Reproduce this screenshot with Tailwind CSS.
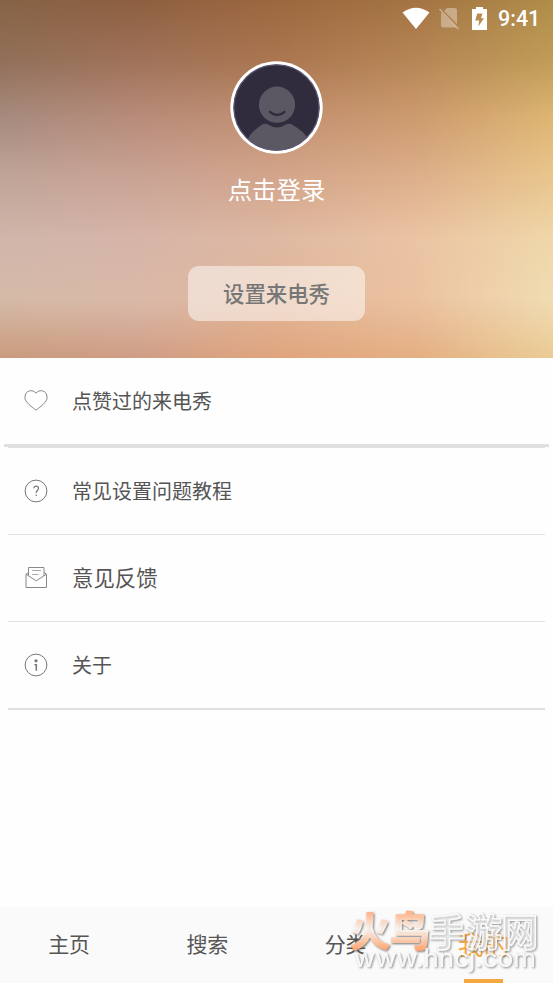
<!DOCTYPE html>
<html lang="zh-CN">
<head>
<meta charset="utf-8">
<title>我的</title>
<script src="https://cdn.jsdelivr.net/npm/@tailwindcss/browser@4"></script>
</head>
<body class="relative flex h-[983px] w-[553px] flex-col overflow-hidden bg-[#fefefe] font-['Noto_Sans_CJK_SC','Noto_Sans',sans-serif] text-[#555]">

<header class="relative h-[358px] shrink-0 overflow-hidden">
  <!-- soft colour field: one horizontal gradient per band, faded into the next -->
  <div class="absolute inset-0 bg-[linear-gradient(90deg,#876346,#8e5f40,#9b683f,#a47443,#b08d4a)]"></div>
  <div class="absolute inset-0 bg-[linear-gradient(90deg,#917059,#a0725a,#aa7650,#b68656,#c09c58)] [mask-image:linear-gradient(180deg,transparent_0px,black_60px)]"></div>
  <div class="absolute inset-0 bg-[linear-gradient(90deg,#a88c80,#b98d7b,#c39173,#cd9c70,#dfb674)] [mask-image:linear-gradient(180deg,transparent_60px,black_120px)]"></div>
  <div class="absolute inset-0 bg-[linear-gradient(90deg,#c1a699,#caa496,#d4a68c,#deb08c,#e9c68e)] [mask-image:linear-gradient(180deg,transparent_120px,black_180px)]"></div>
  <div class="absolute inset-0 bg-[linear-gradient(90deg,#d1b6ab,#d6b5a8,#dfb9a3,#ebc4a4,#efd7a9)] [mask-image:linear-gradient(180deg,transparent_180px,black_240px)]"></div>
  <div class="absolute inset-0 bg-[linear-gradient(90deg,#d5baa7,#dab9a9,#e1b698,#ebc2a1,#f1dcb2)] [mask-image:linear-gradient(180deg,transparent_240px,black_300px)]"></div>
  <div class="absolute inset-0 bg-[linear-gradient(90deg,#c99b7d,#cf9d85,#e0a47d,#e4ae82,#eacb95)] [mask-image:linear-gradient(180deg,transparent_300px,black_358px)]"></div>

  <div class="relative flex h-full flex-col items-center">
    <div class="flex h-[36px] w-full items-center justify-end pr-[13px] text-white">
      <svg class="h-[22px] w-[28px]" viewBox="0 0 28 22" fill="currentColor"><path d="M0.5 5.5Q14-4 27.5 5.5L14 22Z"/></svg>
      <svg class="ml-[8px] h-[24px] w-[22px] text-white/35" viewBox="0 0 22 24" fill="currentColor"><path d="M9 2h8q2 0 2 2v14L6 5ZM4 7l15 14.5H5q-2 0-2-2V6.5Z"/><path d="M1.5 3 20.5 23" stroke="currentColor" stroke-width="1.8"/></svg>
      <svg class="ml-[12px] h-[24px] w-[15px]" viewBox="0 0 15 24"><path fill="currentColor" d="M4 1h7v2h4v21H0V3h4Z"/><path fill="#b78c53" d="M5.2 7.5h5.3L9 12.2h3L6.3 20.5l.9-6H3.2Z"/></svg>
      <span class="ml-[11px] w-[42px] whitespace-nowrap pt-[2px] font-[Roboto] text-[21.5px] font-medium leading-6">9:41</span>
    </div>
    <svg class="mt-[25px] h-[93px] w-[93px]" viewBox="0 0 93 93">
      <defs><clipPath id="face"><circle cx="46.5" cy="46.5" r="43"/></clipPath></defs>
      <circle cx="46.5" cy="46.5" r="46.2" fill="#fff"/>
      <circle cx="46.5" cy="46.5" r="43" fill="#302c3d"/>
      <g clip-path="url(#face)" fill="#5b5864">
        <circle cx="47" cy="43.7" r="18.1"/>
        <path d="M18 79Q19 72 33 63q3-1 6 1 8 5 16 0 3-2 6-1 14 8 16 14v17H18Z"/>
      </g>
      <circle cx="46.5" cy="46.5" r="42.6" fill="none" stroke="#5b5871" stroke-width="1.3"/>
      <path d="M40 50.8q7 6.5 14.5 0" fill="none" stroke="#302c3d" stroke-width="2.3" stroke-linecap="round"/>
    </svg>
    <div class="mt-[17px] h-[36px] text-[24.4px] leading-[36px] text-white">点击登录</div>
    <button class="mt-[59px] h-[55px] w-[177px] rounded-[11px] bg-white/50 text-[21.4px] font-medium leading-[53px] text-[#777]"><span class="block h-[55px]">设置来电秀</span></button>
  </div>
</header>

<main class="flex-1">
  <div class="flex h-[86px] items-center pl-[24px]">
    <svg class="mb-[2px] h-[24px] w-[24px]" viewBox="0 0 24 24" fill="none" stroke="#888" stroke-width="1"><path d="M12 5.2C9 .9.9 2 .9 9.5c0 4.8 6.1 8.5 11.1 12.7C17 18 23.1 14.3 23.1 9.5 23.1 2 15 .9 12 5.2Z"/></svg>
    <span class="ml-[24px] text-[20px] leading-[30px]">点赞过的来电秀</span>
  </div>
  <div class="mx-[4px] h-[3px] bg-[#e0e0e0]"></div>
  <div class="mx-[8px] h-px bg-[#e0e0e0]"></div>
  <div class="flex h-[86px] items-center pl-[24px]">
    <svg class="h-[24px] w-[24px]" viewBox="0 0 24 24" fill="none" stroke="#777" stroke-width="1"><circle cx="12" cy="12" r="10.9"/><path stroke-width="1.2" d="M9.9 9.2Q10 7.2 12.2 7.2t2.3 2c0 2-2.3 2.2-2.3 4.8M12.2 15.6v1.4"/></svg>
    <span class="ml-[24px] text-[20px] leading-[30px]">常见设置问题教程</span>
  </div>
  <div class="mx-[8px] h-px bg-[#e0e0e0]"></div>
  <div class="flex h-[86px] items-center pb-[2px] pl-[24px]">
    <svg class="h-[24px] w-[24px]" viewBox="0 0 24 24" fill="none" stroke="#888" stroke-width="1"><path d="M4.5 7.5 2 9.2v13.3h20.5V9.2L20 7.5M4.5 10.8V2.5H20v8.3M2 9.2 4.5 10.8l7.7 5 7.8-5 2.5-1.6"/><path stroke="#aaa" d="M8 5.5h9M8 9.5h6.5"/></svg>
    <span class="ml-[24px] text-[21.4px] leading-[30px]">意见反馈</span>
  </div>
  <div class="mx-[8px] h-px bg-[#e0e0e0]"></div>
  <div class="flex h-[86px] items-center pl-[24px]">
    <svg class="h-[24px] w-[24px]" viewBox="0 0 24 24" fill="none" stroke="#777" stroke-width="1"><circle cx="12" cy="12" r="10.9"/><circle cx="12" cy="7.8" r="1.6" fill="#777" stroke="none"/><path stroke-width="1.5" d="M10.5 11.7h1.8v6"/></svg>
    <span class="ml-[24px] text-[20px] leading-[30px]">关于</span>
  </div>
  <div class="mx-[8px] h-[2px] bg-[#e0e0e0]"></div>
</main>

<nav class="grid h-[76px] shrink-0 grid-cols-4 bg-[#fafafa] text-center text-[21px] leading-[73px]">
  <span>主页</span>
  <span>搜索</span>
  <span>分类</span>
  <span class="flex flex-col items-center text-[26px] text-[#f5a840]"><span class="h-[72px] leading-[74px]">我的</span><span class="h-[4px] w-[39px] bg-[#f5a840]"></span></span>
</nav>

<!-- site watermark over the tab bar -->
<svg class="pointer-events-none absolute bottom-0 right-0 h-[83px] w-[213px]" viewBox="0 0 213 83">
  <defs>
    <linearGradient id="warm" x1="0" y1="0" x2="0" y2="1"><stop offset=".15" stop-color="#ffa56f"/><stop offset=".5" stop-color="#fffaf6" stop-opacity=".85"/><stop offset=".85" stop-color="#ffa873"/></linearGradient>
    <filter id="shade" x="-10%" y="-20%" width="120%" height="150%"><feDropShadow dx="1" dy="1" stdDeviation=".8" flood-color="#555" flood-opacity=".85"/></filter>
  </defs>
  <g font-weight="700" stroke-linejoin="round" class="font-['Noto_Sans_CJK_SC',sans-serif]">
    <text filter="url(#shade)" x="10" y="46" font-size="40" textLength="80" lengthAdjust="spacingAndGlyphs" fill="url(#warm)" stroke="url(#warm)" stroke-width="1.5">火鸟</text>
    <text filter="url(#shade)" x="89" y="46" font-size="38" textLength="109" lengthAdjust="spacingAndGlyphs" fill="#fff" fill-opacity=".25" stroke="#fff" stroke-opacity=".9" stroke-width="1.4">手游网</text>
  </g>
  <text filter="url(#shade)" x="14" y="67" font-size="25" textLength="182" lengthAdjust="spacingAndGlyphs" fill="#fff" fill-opacity=".85" class="font-[Inter,sans-serif]">www.hncj.com</text>
</svg>
</body>
</html>
